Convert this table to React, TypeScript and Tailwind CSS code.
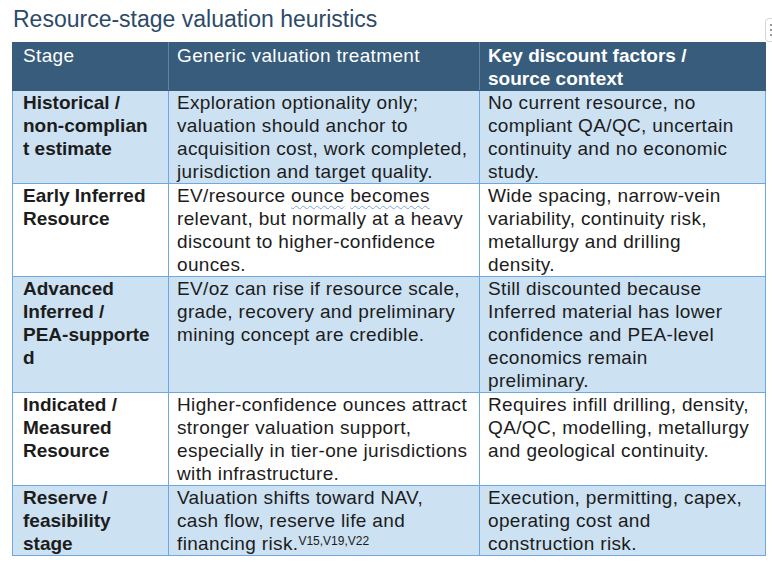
import type { ReactNode } from 'react'

type Row = {
  stage: ReactNode
  treatment: ReactNode
  factors: ReactNode
  shaded: boolean
}

const Squiggle = ({ children }: { children: ReactNode }) => (
  <span className="underline decoration-wavy decoration-[#7aa6e6] decoration-1 underline-offset-[3px]">
    {children}
  </span>
)

const ROWS: Row[] = [
  {
    stage: (
      <>
        Historical /<br />
        non-complian
        <br />t estimate
      </>
    ),
    treatment:
      'Exploration optionality only; valuation should anchor to acquisition cost, work completed, jurisdiction and target quality.',
    factors: 'No current resource, no compliant QA/QC, uncertain continuity and no economic study.',
    shaded: true,
  },
  {
    stage: (
      <>
        Early Inferred
        <br />
        Resource
      </>
    ),
    treatment: (
      <>
        EV/resource <Squiggle>ounce</Squiggle> <Squiggle>becomes</Squiggle> relevant, but normally at a heavy
        discount to higher-confidence ounces.
      </>
    ),
    factors: 'Wide spacing, narrow-vein variability, continuity risk, metallurgy and drilling density.',
    shaded: false,
  },
  {
    stage: (
      <>
        Advanced
        <br />
        Inferred /<br />
        PEA-supporte
        <br />d
      </>
    ),
    treatment: 'EV/oz can rise if resource scale, grade, recovery and preliminary mining concept are credible.',
    factors:
      'Still discounted because Inferred material has lower confidence and PEA-level economics remain preliminary.',
    shaded: true,
  },
  {
    stage: (
      <>
        Indicated /<br />
        Measured
        <br />
        Resource
      </>
    ),
    treatment:
      'Higher-confidence ounces attract stronger valuation support, especially in tier-one jurisdictions with infrastructure.',
    factors: 'Requires infill drilling, density, QA/QC, modelling, metallurgy and geological continuity.',
    shaded: false,
  },
  {
    stage: (
      <>
        Reserve /<br />
        feasibility
        <br />
        stage
      </>
    ),
    treatment: (
      <>
        Valuation shifts toward NAV, cash flow, reserve life and financing risk.
        <sup className="text-[12px] tracking-normal relative -top-[5px]">V15,V19,V22</sup>
      </>
    ),
    factors: 'Execution, permitting, capex, operating cost and construction risk.',
    shaded: true,
  },
]

export default function App() {
  return (
    <div className="relative w-[772px] h-[562px] overflow-hidden bg-white font-['Liberation_Sans',Arial,sans-serif]">
      <h1 className="pl-[13px] pt-[6px] text-[23px] leading-[26px] text-[#2c4a68] font-normal">
        Resource-stage valuation heuristics
      </h1>

      <table className="ml-[12px] mt-[10px] w-[753px] table-fixed border-collapse text-[19px] leading-[23px]">
        <colgroup>
          <col className="w-[156px]" />
          <col className="w-[311px]" />
          <col className="w-[286px]" />
        </colgroup>
        <thead>
          <tr className="bg-[#375c7c] text-white align-top">
            <th className="border border-[#375c7c] border-r-[#5d83a6] pl-[10px] pr-[2px] pt-[1px] text-left font-normal tracking-[0.35px]">
              Stage
            </th>
            <th className="border border-[#375c7c] border-r-[#5d83a6] pl-[8px] pr-[10px] pt-[1px] text-left font-normal tracking-[0.35px]">
              Generic valuation treatment
            </th>
            <th className="border border-[#375c7c] pl-[8px] pr-[13px] pt-[1px] text-left font-bold">
              Key discount factors /<br />
              source context
            </th>
          </tr>
        </thead>
        <tbody className="text-[#1c1c1c]">
          {ROWS.map((row, i) => (
            <tr key={i} className={row.shaded ? 'bg-[#cce1f2] align-top' : 'bg-white align-top'}>
              <td className="border border-[#6da9e0] pl-[10px] pr-0 pt-0 font-bold">{row.stage}</td>
              <td className="border border-[#6da9e0] pl-[8px] pr-[10px] pt-0 tracking-[0.35px]">
                {row.treatment}
              </td>
              <td className="border border-[#6da9e0] pl-[8px] pr-[13px] pt-0 tracking-[0.35px]">
                {row.factors}
              </td>
            </tr>
          ))}
        </tbody>
      </table>

      <div className="absolute left-[765px] top-[18px] w-[20px] h-[24px] rounded-[4px] border border-[#d6d6d6] bg-white flex flex-col items-start justify-center gap-[3px] pl-[4px]">
        <span className="w-[2px] h-[2px] bg-[#9a9a9a]" />
        <span className="w-[2px] h-[2px] bg-[#9a9a9a]" />
        <span className="w-[2px] h-[2px] bg-[#9a9a9a]" />
      </div>
    </div>
  )
}
